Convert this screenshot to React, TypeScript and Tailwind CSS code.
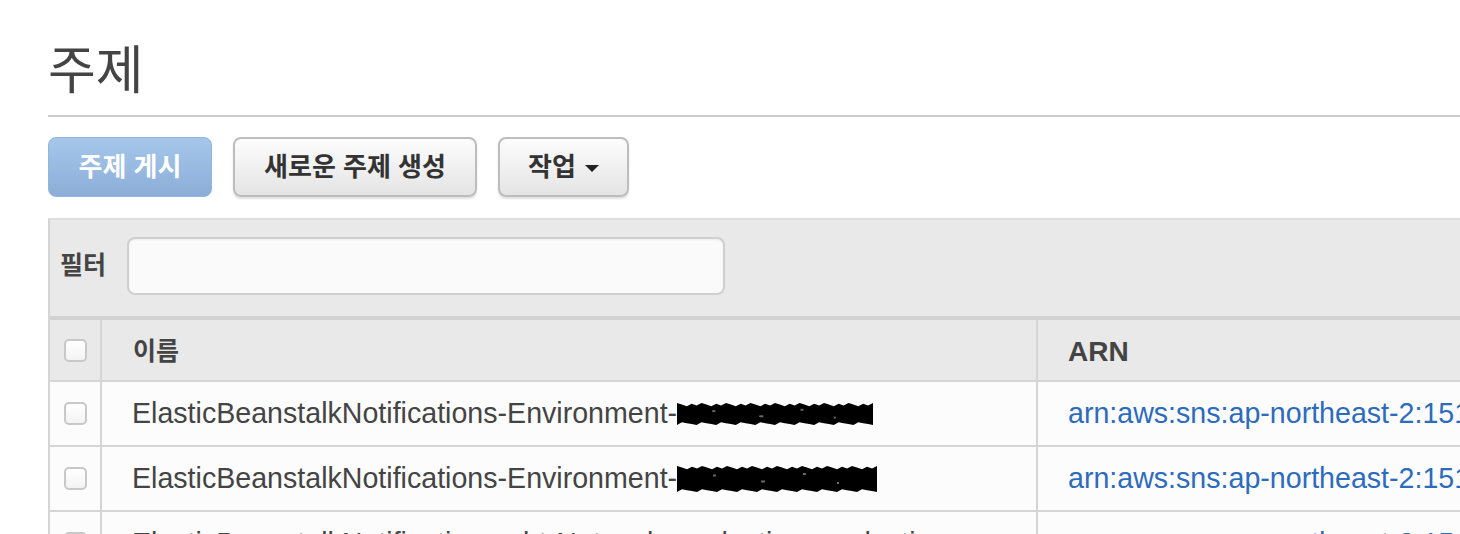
import React from "react";

const FONT = { fontFamily: '"Liberation Sans", "Noto Sans CJK KR", sans-serif' };

function Redaction({ width, height }: { width: number; height: number }) {
  // rough scribble used to black out part of a topic name
  const pts: string[] = [];
  const steps = 40;
  for (let i = 0; i <= steps; i++) {
    const x = (width / steps) * i;
    const y = 2 + ((i * 7) % 5) * 0.8;
    pts.push(`${x.toFixed(1)},${y.toFixed(1)}`);
  }
  for (let i = steps; i >= 0; i--) {
    const x = (width / steps) * i;
    const y = height - 2 - ((i * 3) % 4) * 0.9;
    pts.push(`${x.toFixed(1)},${y.toFixed(1)}`);
  }
  return (
    <svg width={width} height={height} viewBox={`0 0 ${width} ${height}`} className="inline-block align-middle">
      <polygon points={pts.join(" ")} fill="#000" />
      <g fill="#666">
        <rect x={width * 0.18} y={height * 0.35} width="3" height="2" />
        <rect x={width * 0.42} y={height * 0.55} width="4" height="2" />
        <rect x={width * 0.63} y={height * 0.3} width="3" height="2" />
        <rect x={width * 0.8} y={height * 0.6} width="2" height="2" />
      </g>
    </svg>
  );
}

function Checkbox() {
  return (
    <div className="w-[23px] h-[23px] rounded-[5px] border-2 border-[#c8c8c8] bg-gradient-to-b from-white to-[#f3f3f3]" />
  );
}

const rows = [
  { name: "ElasticBeanstalkNotifications-Environment-", redact: [196, 26], arn: "arn:aws:sns:ap-northeast-2:151" },
  { name: "ElasticBeanstalkNotifications-Environment-", redact: [200, 30], arn: "arn:aws:sns:ap-northeast-2:151" },
  { name: "ElasticBeanstalkNotifications-ebt-Network-production-production", redact: null, arn: "arn:aws:sns:ap-northeast-2:151" },
];

export default function App() {
  return (
    <div className="w-[1460px] h-[534px] overflow-hidden bg-white text-[#444]" style={FONT}>
      <div className="w-[2000px] pl-12">
        {/* Title */}
        <div className="pt-[45px] pb-[18px] border-b-2 border-[#cccccc]">
          <h1 className="text-[52px] leading-none h-[52px] font-normal text-[#444]">주제</h1>
        </div>

        {/* Toolbar */}
        <div className="flex gap-[21px] mt-[20px]">
          <button className="h-[60px] w-[164px] rounded-[8px] border border-[#93b4dc] bg-gradient-to-b from-[#a6c7eb] to-[#8cadd7] text-white font-bold text-[26px]">
            주제 게시
          </button>
          <button className="h-[60px] w-[244px] rounded-[8px] border-2 border-[#bdbdbd] bg-gradient-to-b from-[#fdfdfd] to-[#e4e4e4] shadow-[0_2px_2px_rgba(0,0,0,0.12)] text-[#333] font-bold text-[26px]">
            새로운 주제 생성
          </button>
          <button className="h-[60px] w-[131px] rounded-[8px] border-2 border-[#bdbdbd] bg-gradient-to-b from-[#fdfdfd] to-[#e4e4e4] shadow-[0_2px_2px_rgba(0,0,0,0.12)] text-[#333] font-bold text-[26px] flex items-center justify-center gap-[9px]">
            <span>작업</span>
            <span className="w-0 h-0 border-t-[7px] border-x-[7px] border-x-transparent border-t-[#222] mt-[2px]" />
          </button>
        </div>

        {/* Panel */}
        <div className="mt-[21px] bg-[#e9e9e9] border-t-2 border-l-2 border-t-[#dedede] border-l-[#d5d5d5]">
          <div className="flex items-center h-[96px] pl-[10px] pb-[4px]">
            <span className="font-bold text-[25px] text-[#444] w-[67px]">필터</span>
            <div className="w-[598px] h-[58px] rounded-[8px] border-2 border-[#cfcfcf] bg-[#fafafa] shadow-[inset_0_1px_2px_rgba(0,0,0,0.06)]" />
          </div>

          <div className="border-t-4 border-[#d2d2d2]">
            {/* Header */}
            <div className="flex h-[62px] border-b-2 border-[#d5d5d5] bg-[#e9e9e9]">
              <div className="w-[52px] flex items-center justify-center border-r-2 border-[#d5d5d5]">
                <Checkbox />
              </div>
              <div className="w-[936px] flex items-center pl-[31px] pt-[4px] border-r-2 border-[#d5d5d5] font-bold text-[25px] text-[#444]">
                이름
              </div>
              <div className="w-[700px] flex items-center pl-[30px] pt-[3px] font-bold text-[28px] text-[#444]">ARN</div>
            </div>

            {/* Rows */}
            {rows.map((r, i) => (
              <div key={i} className="flex h-[65px] border-b-2 border-[#d5d5d5] bg-[#fcfcfc]">
                <div className="w-[52px] flex items-center justify-center border-r-2 border-[#d5d5d5]">
                  <Checkbox />
                </div>
                <div className="w-[936px] flex items-center pl-[30px] border-r-2 border-[#d5d5d5] text-[28.6px] text-[#444] whitespace-nowrap overflow-hidden">
                  <span>{r.name}</span>
                  {r.redact && <Redaction width={r.redact[0]} height={r.redact[1]} />}
                </div>
                <div className="w-[700px] flex items-center pl-[30px] text-[28.6px] text-[#2d6bbd] whitespace-nowrap">
                  {r.arn}
                </div>
              </div>
            ))}
          </div>
        </div>
      </div>
    </div>
  );
}
